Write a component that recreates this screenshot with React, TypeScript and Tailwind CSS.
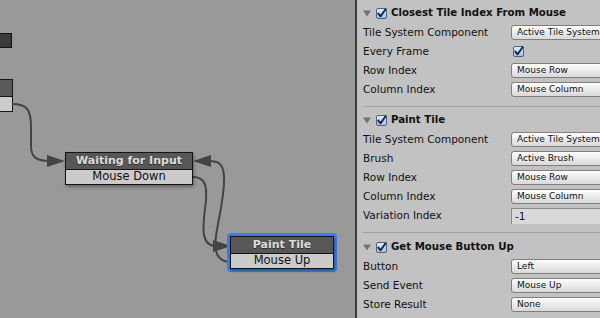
import React from "react";

const font = { fontFamily: '"DejaVu Sans", Verdana, sans-serif' };

function Check({ size = 11 }: { size?: number }) {
  return (
    <svg width={size} height={size} viewBox="0 0 11 11" className="shrink-0">
      <defs>
        <linearGradient id="cb" x1="0" y1="0" x2="0" y2="1">
          <stop offset="0" stopColor="#e4eefb" />
          <stop offset="1" stopColor="#9ebde6" />
        </linearGradient>
      </defs>
      <rect x="0.5" y="0.5" width="10" height="10" rx="1.5" fill="url(#cb)" stroke="#4f6283" />
      <path d="M2.3 5.6 L4.6 8.3 L9.6 1.2" fill="none" stroke="#15233f" strokeWidth="1.9" strokeLinecap="round" strokeLinejoin="round" />
    </svg>
  );
}

function Tri() {
  return (
    <svg width="8" height="7" viewBox="0 0 8 7" className="shrink-0">
      <path d="M0 0.5 L8 0.5 L4 6.5 Z" fill="#737373" />
    </svg>
  );
}

function Dropdown({ text }: { text: string }) {
  return (
    <div className="h-[15px] w-[110px] shrink-0 whitespace-nowrap rounded-[3px] border border-[#7f7f7f] bg-gradient-to-b from-[#fdfdfd] to-[#d9d9d9] pl-[5px] text-[9px] leading-[13px] text-[#111]">
      {text}
    </div>
  );
}

function Row({ label, children }: { label: string; children: React.ReactNode }) {
  return (
    <div className="flex h-[19px] items-center">
      <div className="w-[148px] shrink-0 text-[10.5px] text-[#111]">{label}</div>
      {children}
    </div>
  );
}

function Header({ title }: { title: string }) {
  return (
    <div className="flex h-[20px] items-center">
      <Tri />
      <div className="ml-[5px]">
        <Check />
      </div>
      <div className="ml-[4px] text-[10.2px] font-bold text-[#111]">{title}</div>
    </div>
  );
}

function Section({ title, children, className }: { title: string; children: React.ReactNode; className: string }) {
  return (
    <div className={className}>
      <Header title={title} />
      {children}
    </div>
  );
}

function Node({ title, sub }: { title: string; sub: string }) {
  return (
    <div className="flex flex-col border border-[#141414] shadow-[1px_2px_3px_rgba(0,0,0,0.35)]">
      <div className="flex h-[16px] items-center justify-center bg-[#575757] text-[11px] font-bold text-[#dedede] [text-shadow:0_1px_0_rgba(0,0,0,0.5)]">
        {title}
      </div>
      <div className="flex h-[15px] items-center justify-center border-t border-[#141414] bg-[#cbcbcb] text-[11.5px] text-[#111]">
        {sub}
      </div>
    </div>
  );
}

export default function App() {
  return (
    <div className="flex h-[318px] w-[600px] overflow-hidden" style={font}>
      <div className="relative h-full w-[355px] shrink-0 overflow-hidden bg-[#999999]">
        <div className="absolute left-[-10px] top-[33px] h-[15px] w-[22px] border border-[#141414] bg-[#3b3b3b]" />
        <div className="absolute left-[-10px] top-[79px] flex w-[23px] flex-col border border-[#141414]">
          <div className="h-[16px] bg-[#5a5a5a]" />
          <div className="h-[15px] border-t border-[#141414] bg-[#cbcbcb]" />
        </div>

        <svg className="absolute left-0 top-0" width="355" height="318">
          <g fill="none" stroke="#444" strokeWidth="2">
            <path d="M12 104 C 27 104, 31 110, 31 126 L 31 146 C 31 157, 36 161, 50 161" />
            <path d="M193 177 C 205 177, 207 186, 206 200 C 204 220, 198 246, 216 246" />
            <path d="M231 262 C 216 262, 214 250, 216 236 C 219 215, 225 195, 224 176 C 223 164, 219 161, 209 161" />
          </g>
          <g fill="#444">
            <path d="M47 155 L65 161 L47 167 Z" />
            <path d="M213 240 L231 246 L213 252 Z" />
            <path d="M211 155 L193 161 L211 167 Z" />
          </g>
        </svg>

        <div className="absolute left-[65px] top-[152px] w-[128px]">
          <Node title="Waiting for Input" sub="Mouse Down" />
        </div>
        <div className="absolute left-[227px] top-[233px] w-[110px] rounded-[4px] bg-[#3d7ee6] p-[3px]">
          <Node title="Paint Tile" sub="Mouse Up" />
        </div>
      </div>

      <div className="w-[2px] shrink-0 bg-[#3a3a3a]" />

      <div className="h-full flex-1 overflow-hidden bg-[#c2c2c2] pl-[6px]">
        <Section title="Closest Tile Index From Mouse" className="border-b border-[#a2a2a2] pt-[3px] pb-[7px]">
          <Row label="Tile System Component">
            <Dropdown text="Active Tile System" />
          </Row>
          <Row label="Every Frame">
            <div className="ml-[2px]">
              <Check />
            </div>
          </Row>
          <Row label="Row Index">
            <Dropdown text="Mouse Row" />
          </Row>
          <Row label="Column Index">
            <Dropdown text="Mouse Column" />
          </Row>
        </Section>
        <Section title="Paint Tile" className="border-b border-[#a2a2a2] pt-[3px] pb-[7px]">
          <Row label="Tile System Component">
            <Dropdown text="Active Tile System" />
          </Row>
          <Row label="Brush">
            <Dropdown text="Active Brush" />
          </Row>
          <Row label="Row Index">
            <Dropdown text="Mouse Row" />
          </Row>
          <Row label="Column Index">
            <Dropdown text="Mouse Column" />
          </Row>
          <Row label="Variation Index">
            <div className="h-[16px] w-[110px] shrink-0 border-l border-t border-[#8a8a8a] bg-[#d9d9d9] pl-[3px] text-[10.5px] leading-[15px] text-[#111]">
              -1
            </div>
          </Row>
        </Section>
        <Section title="Get Mouse Button Up" className="pt-[4px]">
          <Row label="Button">
            <Dropdown text="Left" />
          </Row>
          <Row label="Send Event">
            <Dropdown text="Mouse Up" />
          </Row>
          <Row label="Store Result">
            <Dropdown text="None" />
          </Row>
        </Section>
      </div>
    </div>
  );
}
